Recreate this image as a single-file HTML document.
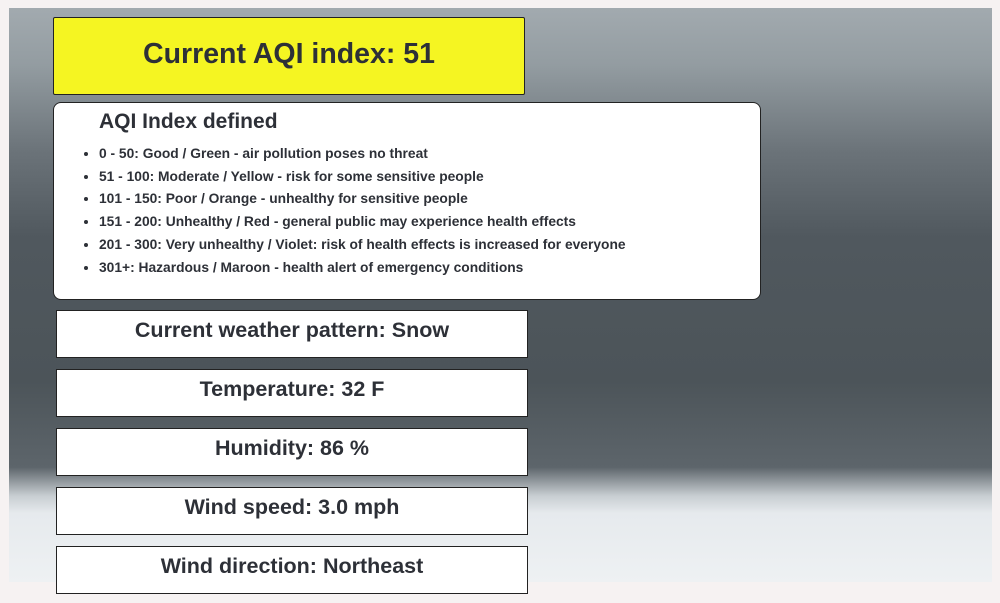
<!DOCTYPE html>
<html><head><style>
body{margin:0;width:1000px;height:603px;background:#f6f2f2;position:relative;overflow:hidden;font-family:"Liberation Sans",sans-serif;color:#2d3037}
.bg{position:absolute;left:9px;top:8px;width:983px;height:574px;
background:
linear-gradient(180deg,#a2aaaf 0,#939ca1 10%,#6b7379 25%,#50585e 40%,#4c5459 65%,#5d656b 80%,#c8ced2 85%,#e6eaed 88%,#eef1f3 100%);}
.box{position:absolute;box-sizing:border-box;background:#fff;border:1px solid #222;text-align:center;font-weight:bold}
.y{left:53px;top:17px;width:472px;height:78px;background:#f5f522;font-size:28.5px;line-height:72px;border-radius:2px}
.aqi{left:53px;top:102px;width:708px;height:198px;border-radius:8px;text-align:left}
.aqi h2{margin:7px 0 0 45px;font-size:21px}
.aqi ul{margin:9px 0 0 0;padding-left:45px;font-size:13.8px;line-height:22.7px}
.w{left:56px;width:472px;height:48px;font-size:21.5px;line-height:38px}
</style></head><body>
<div class="bg"></div>
<div class="box y">Current AQI index: 51</div>
<div class="box aqi"><h2>AQI Index defined</h2><ul>
<li>0 - 50: Good / Green - air pollution poses no threat</li>
<li>51 - 100: Moderate / Yellow - risk for some sensitive people</li>
<li>101 - 150: Poor / Orange - unhealthy for sensitive people</li>
<li>151 - 200: Unhealthy / Red - general public may experience health effects</li>
<li>201 - 300: Very unhealthy / Violet: risk of health effects is increased for everyone</li>
<li>301+: Hazardous / Maroon - health alert of emergency conditions</li></ul></div>
<div class="box w" style="top:310px">Current weather pattern: Snow</div>
<div class="box w" style="top:369px">Temperature: 32 F</div>
<div class="box w" style="top:428px">Humidity: 86 %</div>
<div class="box w" style="top:487px">Wind speed: 3.0 mph</div>
<div class="box w" style="top:546px">Wind direction: Northeast</div>
</body></html>
